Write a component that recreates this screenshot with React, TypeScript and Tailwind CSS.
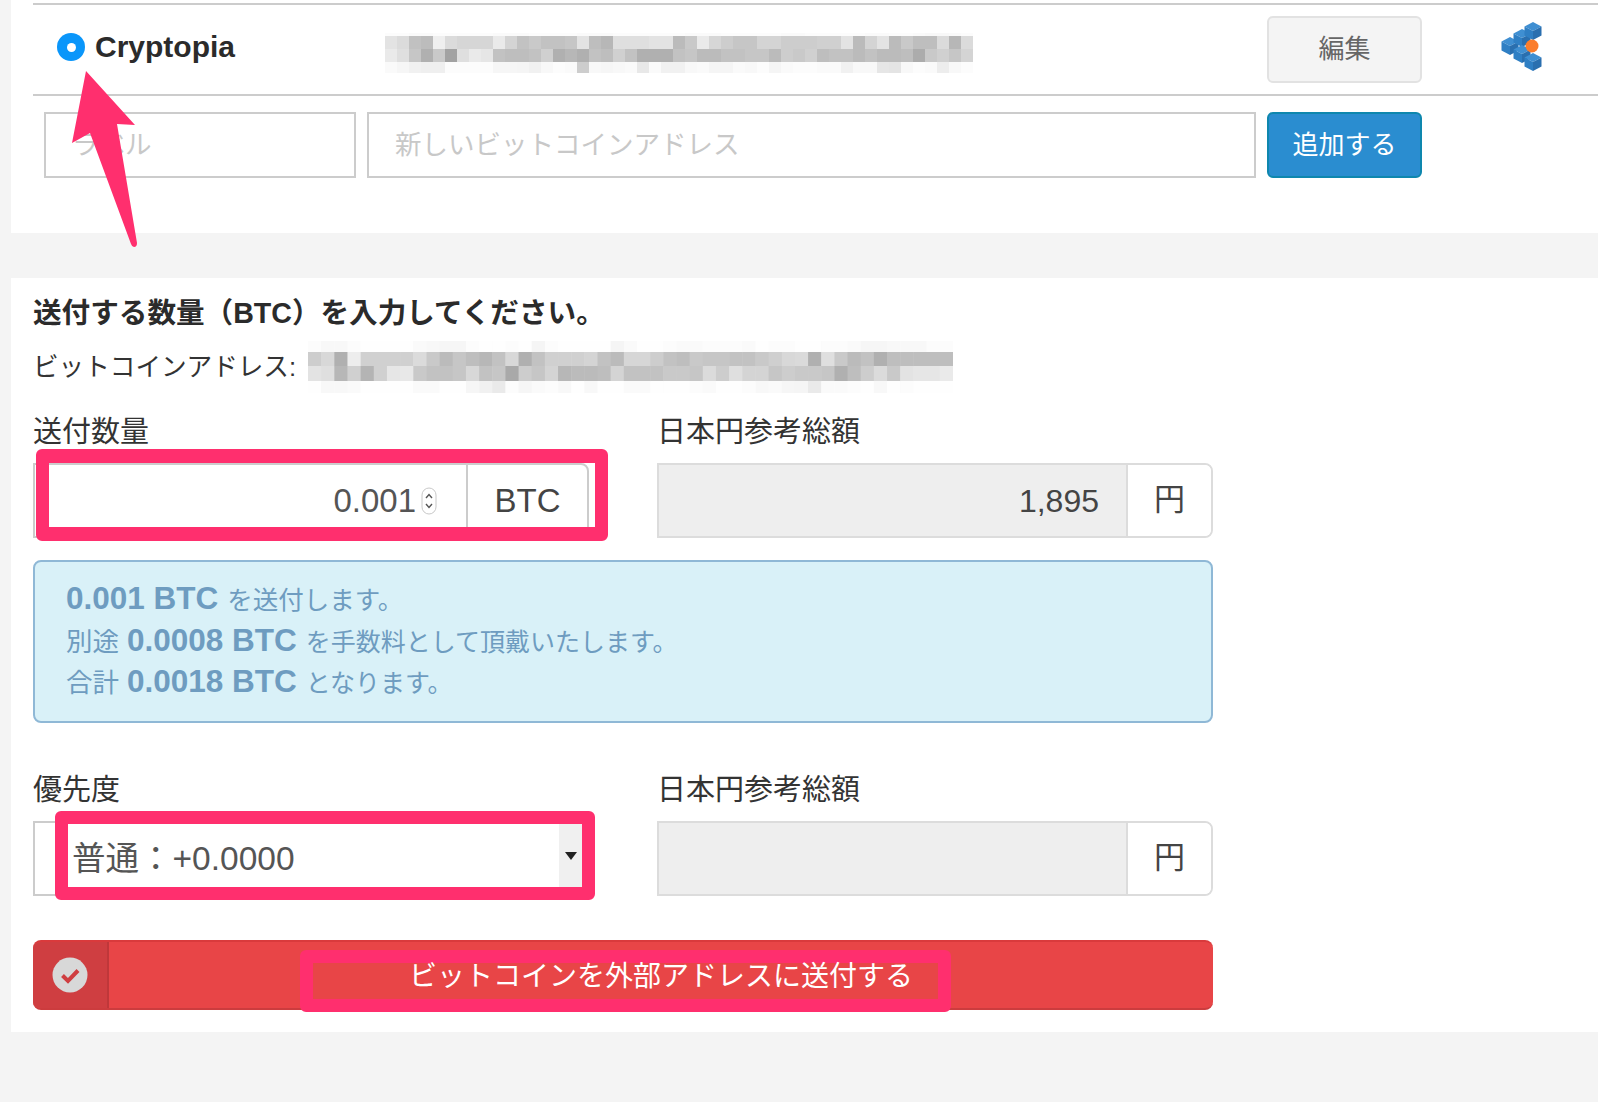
import React from "react";

const addressBlurTop = [
  "fc fc fa fa fc fc fc fc fc fa fa fa fc fc fc fc fa fa fa fc fc fc fc fc fc fa fa fa fc fc fc fc fc fa fa fc fc fc fc fc fa fa fc fc fa f8 f8 fa fc",
  "e0 d8 bb b5 ee d8 d2 d2 d2 e8 d0 bc c4 bc bc c0 e0 b8 b0 dc dc dc e0 e0 b4 c4 e8 d2 c8 c0 c0 d0 d0 c8 c8 c8 cc cc e0 b4 d0 e0 b4 c4 b8 b8 d8 b0 d8",
  "e8 dc c0 a8 c4 98 dc e8 e4 bc b8 b8 bc cc a8 b0 a8 bc b8 cc bc a8 a8 a8 bc c0 b4 b4 bc bc c0 c0 b4 c8 c4 cc b8 bc bc b4 bc b4 b4 b8 a4 c4 cc c0 d0 d8",
  "fa f6 f0 ee ee fc fc fc fc f6 f6 f4 f0 f8 fc fa c8 f8 f6 f8 fa e6 fa f0 f0 f8 fa f4 f4 fa f8 fc f4 fa fc fc fa fa f0 f8 f8 e4 e2 f8 fc fa ec f8 fc",
];

const addressBlurForm = [
  "fc f8 f8 fc fe fe fe fe fa f8 f6 f6 fc fe fe fc fe f4 fc fe fe fe fe f4 fa fe fe fc fa fa fc fc fc fa fe fc fc fe fe fc fc fa f6 f6 f8 f8 f8 fc fc",
  "c8 d4 a8 ec cc cc cc cc d8 c4 b4 c0 b8 b0 bc d4 a8 bc cc cc cc d0 bc b4 d2 d2 c8 bc b8 c4 c0 c0 bc bc c4 ca d4 d6 a8 dc c4 b4 bc a8 b8 b8 b8 b8 b8",
  "e0 dc b0 cc ac cc e4 e6 c4 bc bc c0 d4 bc c0 a0 c8 c0 d0 b0 b4 b4 b8 d0 bc bc bc c4 c4 c0 d8 c8 dc d0 d0 c0 c8 c4 c4 c0 a8 b8 c8 d8 c4 e0 e4 e4 e8",
  "fe f8 f8 fa fe fe fe fe fa fa fe fe f6 f0 e8 fc f6 fa fc f8 fe f8 fe fe fa fa fe fe fe fc fa fe fe fc f8 fa f6 f4 e8 fa fa fc fe f8 fe fc fe fe fe",
];

function PixelBlur({ rows, cell, heights, className }: { rows: string[]; cell: number; heights: number[]; className: string }) {
  const total = heights.reduce((a, b) => a + b, 0);
  const parsed = rows.map((r) => r.split(" "));
  const cols = parsed[0].length;
  let y = 0;
  return (
    <svg className={className} width={cols * cell} height={total} viewBox={`0 0 ${cols * cell} ${total}`}>
      {parsed.map((row, i) => {
        const top = y;
        y += heights[i];
        return row.map((v, j) => (
          <rect key={`${i}-${j}`} x={j * cell} y={top} width={cell + 0.5} height={heights[i] + 0.5} fill={`#${v}${v}${v}`} />
        ));
      })}
    </svg>
  );
}

function Cube({ cx, cy }: { cx: number; cy: number }) {
  const w = 8.5;
  const h = 9;
  return (
    <g>
      <polygon points={`${cx},${cy - h} ${cx + w},${cy - h / 2} ${cx},${cy} ${cx - w},${cy - h / 2}`} fill="#3f8fd2" />
      <polygon points={`${cx - w},${cy - h / 2} ${cx},${cy} ${cx},${cy + h} ${cx - w},${cy + h / 2}`} fill="#2f7fc4" />
      <polygon points={`${cx + w},${cy - h / 2} ${cx},${cy} ${cx},${cy + h} ${cx + w},${cy + h / 2}`} fill="#2a6faf" />
    </g>
  );
}

function CryptopiaLogo() {
  return (
    <svg width="44" height="52" viewBox="0 0 44 52">
      <Cube cx={10} cy={25} />
      <Cube cx={22} cy={17} />
      <Cube cx={33} cy={10} />
      <Cube cx={22} cy={33} />
      <Cube cx={33} cy={41} />
      <circle cx="32" cy="25" r="6.5" fill="#fb7d2c" />
    </svg>
  );
}

function YenField({ value }: { value?: string }) {
  return (
    <div className="flex h-[75px] w-[556px] overflow-hidden rounded-r-lg border-2 border-[#dcdcdc]">
      <div className="flex flex-1 items-center justify-end bg-[#eeeeee] pr-[27px] text-[32px] text-[#444]">{value}</div>
      <div className="flex w-[85px] items-center justify-center border-l-2 border-[#dcdcdc] bg-white text-[31px] text-[#444]">円</div>
    </div>
  );
}

export default function App() {
  return (
    <div className="relative h-[1102px] w-full overflow-hidden bg-[#f4f4f4] pl-[11px] text-[#333] [font-family:'Liberation_Sans','Noto_Sans_CJK_JP',sans-serif]">
      {/* Address list */}
      <section className="h-[233px] bg-white pl-[22px] pt-[3px]">
        <div className="h-[93px] border-y-2 border-[#cccccc]">
          <div className="flex h-full items-center">
            <div className="mb-[5px] ml-[24px] flex h-[28px] w-[28px] shrink-0 items-center justify-center rounded-full bg-[#0a96fa]">
              <span className="h-[9px] w-[9px] rounded-full bg-white" />
            </div>
            <span className="mb-[6px] ml-[10px] w-[290px] shrink-0 text-[30px] font-semibold text-[#2b2b2b]">Cryptopia</span>
            <PixelBlur rows={addressBlurTop} cell={12} heights={[3, 13, 13, 11]} className="mt-[6px] shrink-0 opacity-90 blur-[0.6px]" />
            <button className="ml-[294px] h-[67px] w-[155px] shrink-0 rounded-md border-2 border-[#e2e2e2] bg-[#f4f4f4] text-[26px] text-[#666]">編集</button>
            <div className="ml-[78px] mt-[-5px] shrink-0">
              <CryptopiaLogo />
            </div>
          </div>
        </div>
        <div className="mt-[16px] flex gap-[11px] pl-[11px]">
          <input
            placeholder="ラベル"
            className="h-[66px] w-[312px] border-2 border-[#cccccc] px-[26px] text-[26.5px] outline-none placeholder:text-[#c8c8c8]"
          />
          <input
            placeholder="新しいビットコインアドレス"
            className="h-[66px] w-[889px] border-2 border-[#cccccc] px-[26px] text-[26.5px] outline-none placeholder:text-[#c8c8c8]"
          />
          <button className="h-[66px] w-[155px] rounded-md border-2 border-[#0e87ae] bg-[#2a8dd0] text-[26px] text-white">追加する</button>
        </div>
      </section>

      {/* Send form */}
      <section className="mt-[45px] h-[754px] bg-white pl-[22px]">
        <h2 className="pt-[15px] text-[28.6px] leading-[40px] font-bold text-[#2b2b2b]">送付する数量（BTC）を入力してください。</h2>
        <div className="mt-[9px] flex h-[50px] items-center text-[25.6px]">
          <span className="w-[275px]">ビットコインアドレス:</span>
          <PixelBlur rows={addressBlurForm} cell={13.16} heights={[11, 14, 15, 12]} className="shrink-0 opacity-90 blur-[0.6px]" />
        </div>

        <div className="mt-[20px] flex gap-[54px]">
          <div className="w-[570px]">
            <label className="mb-[11px] block text-[29px] leading-[40px]">送付数量</label>
            <div className="flex h-[75px] w-[556px] overflow-hidden rounded-r-lg border-2 border-[#cccccc]">
              <div className="flex flex-1 items-center justify-end pr-[29px]">
                <span className="text-[33px] text-[#555]">0.001</span>
                <svg className="ml-[5px]" width="16" height="28" viewBox="0 0 16 28">
                  <rect x="1" y="1" width="14" height="26" rx="7" fill="#fff" stroke="#c8c8c8" />
                  <path d="M5 11 8 7.5 11 11M5 17l3 3.5 3-3.5" fill="none" stroke="#555" strokeWidth="1.4" />
                </svg>
              </div>
              <div className="flex w-[121px] items-center justify-center border-l-2 border-[#cccccc] text-[33px] text-[#444]">BTC</div>
            </div>
          </div>
          <div>
            <label className="mb-[11px] block text-[29px] leading-[40px]">日本円参考総額</label>
            <YenField value="1,895" />
          </div>
        </div>

        <div className="mt-[22px] h-[163px] w-[1180px] rounded-lg border-2 border-[#8fb8d6] bg-[#d9f1f8] pl-[31px] pt-[16px] text-[25px] text-[#6e9cc0]">
          <p className="h-[41.5px] leading-[41px]"><b className="mr-[2px] text-[31.5px]">0.001 BTC</b> <span className="text-[25.5px]">を送付します。</span></p>
          <p className="h-[41.5px] leading-[41px]"><span className="text-[26.5px]">別途</span> <b className="ml-[1px] mr-[2px] text-[31.5px]">0.0008 BTC</b> を手数料として頂戴いたします。</p>
          <p className="h-[41.5px] leading-[41px]"><span className="text-[26.5px]">合計</span> <b className="ml-[1px] mr-[2px] text-[31.5px]">0.0018 BTC</b> となります。</p>
        </div>

        <div className="mt-[47px] flex gap-[54px]">
          <div className="w-[570px]">
            <label className="mb-[11px] block text-[29px] leading-[40px]">優先度</label>
            <div className="flex h-[75px] w-[556px] border-2 border-[#cccccc]">
              <div className="relative z-10 flex flex-1 items-center pl-[37px] pt-[2px] text-[33.5px] text-[#555]">普通：+0.0000</div>
            </div>
          </div>
          <div>
            <label className="mb-[11px] block text-[29px] leading-[40px]">日本円参考総額</label>
            <YenField />
          </div>
        </div>

        <button className="mt-[44px] flex h-[70px] w-[1180px] overflow-hidden rounded-lg border-t-2 border-b-2 border-t-[#d93a3c] border-b-[#cc3c3e] bg-[#e84547]">
          <span className="flex h-full w-[76px] items-center justify-center border-r-2 border-[#bf373a] bg-[#cf3e41]">
            <svg width="36" height="36" viewBox="0 0 36 36">
              <circle cx="18" cy="18" r="17.5" fill="#d8d8d8" />
              <path d="M10.5 18.5 16 24 26 13.5" fill="none" stroke="#cf3e41" strokeWidth="4" />
            </svg>
          </span>
          <span className="relative z-10 flex h-full flex-1 items-center justify-center pt-[4px] text-[28px] text-white">ビットコインを外部アドレスに送付する</span>
        </button>
      </section>

      {/* Annotations over the page */}
      <div className="absolute left-[36px] top-[449px] h-[92px] w-[572px] rounded-md border-x-[13px] border-y-[14px] border-[#ff2f6e]" />
      <div className="absolute left-[55px] top-[811px] flex h-[89px] w-[540px] justify-end rounded-md border-[13px] border-[#ff2f6e] bg-white">
        <span className="flex w-[23px] items-center justify-center bg-[#f0f0f0]">
          <svg width="14" height="8" viewBox="0 0 14 8"><path d="M1 0h12L7 8z" fill="#222" /></svg>
        </span>
      </div>
      <div className="absolute left-[300px] top-[950px] h-[62px] w-[651px] rounded-md border-[13px] border-[#ff2f6e] bg-[#e84547]" />
      <svg className="absolute left-[70px] top-[69px]" width="70" height="182" viewBox="0 0 70 182">
        <path d="M16 2 65 56 47 55 67 174Q67 178 64 178 62 178 61 175L20 64 2 74z" fill="#ff2f6e" />
      </svg>
    </div>
  );
}
